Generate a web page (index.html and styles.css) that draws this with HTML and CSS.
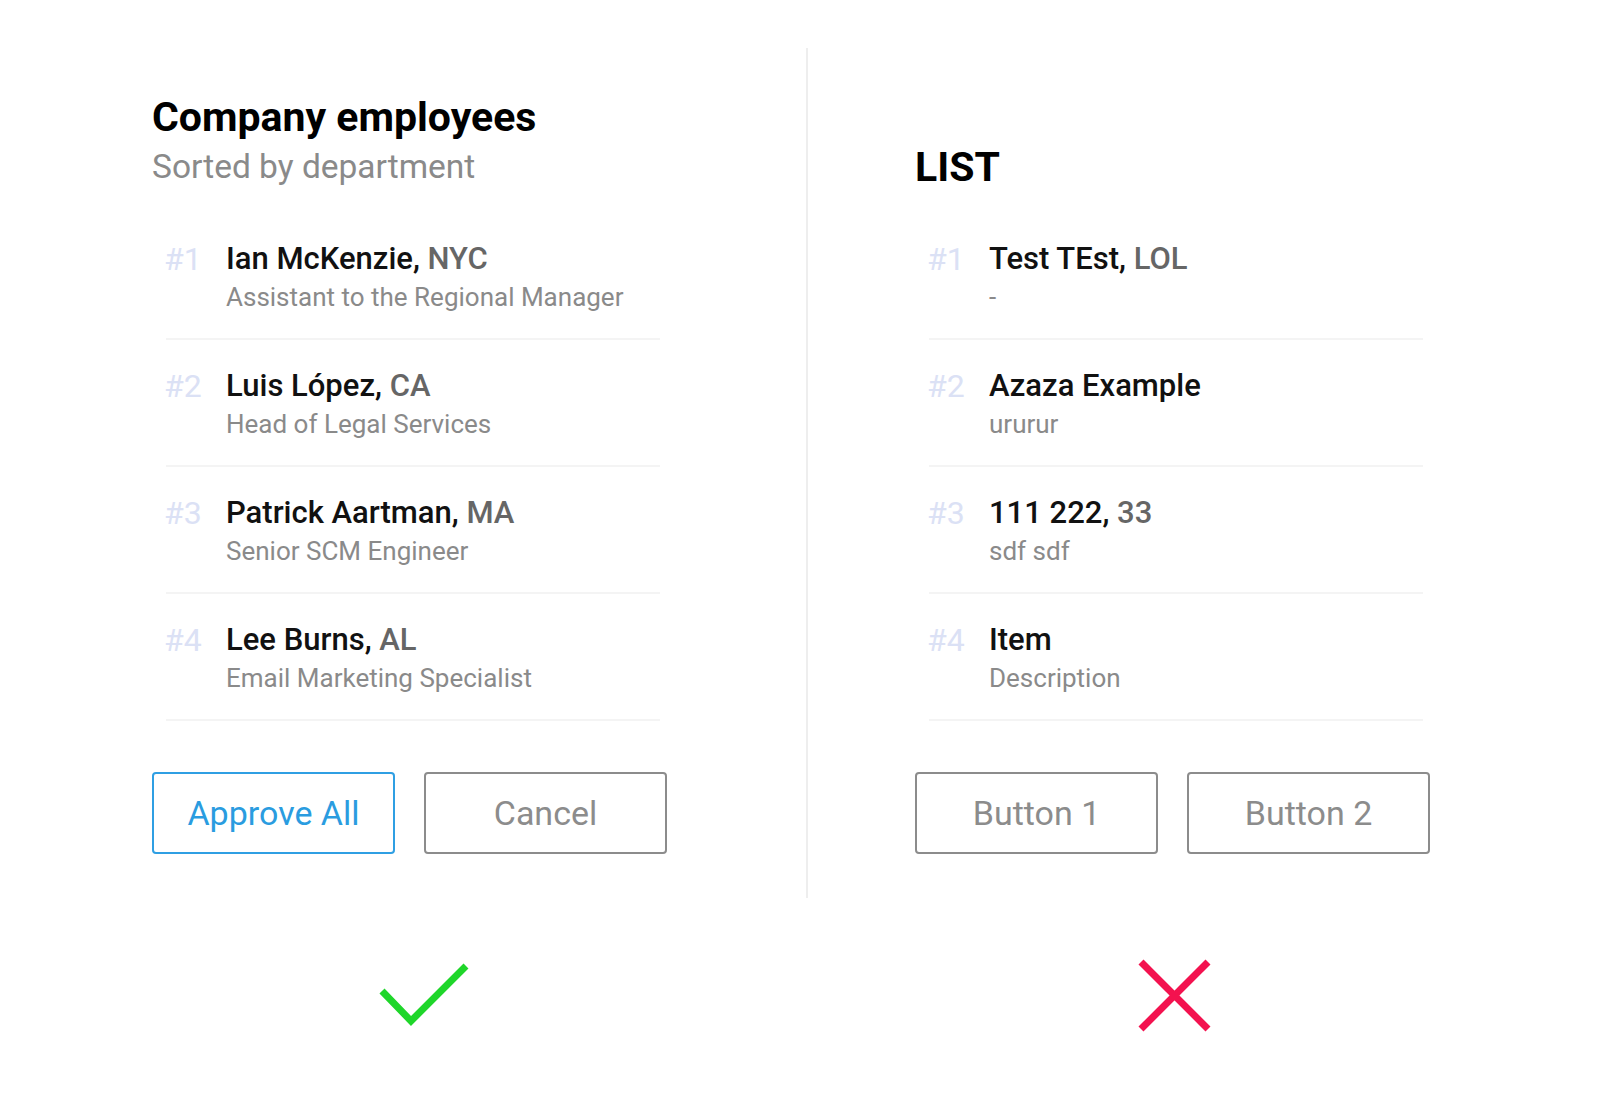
FILE: index.html
```html
<!DOCTYPE html>
<html lang="en">
<head>
    <meta charset="UTF-8">
    <meta name="viewport" content="width=device-width, initial-scale=1.0">
    <title>List design - do and don't</title>
    <link rel="stylesheet" href="styles.css">
</head>
<body>
    <div class="board">
        <!-- Good example -->
        <div class="panel">
            <div class="panel-header">
                <h1 class="title">Company employees</h1>
                <div class="subtitle">Sorted by department</div>
            </div>
            <ul class="list">
                <li class="list-row">
                    <span class="row-num">#1</span>
                    <div class="row-body">
                        <div class="row-name">Ian McKenzie, <span class="row-extra">NYC</span></div>
                        <div class="row-desc">Assistant to the Regional Manager</div>
                    </div>
                </li>
                <li class="list-row">
                    <span class="row-num">#2</span>
                    <div class="row-body">
                        <div class="row-name">Luis López, <span class="row-extra">CA</span></div>
                        <div class="row-desc">Head of Legal Services</div>
                    </div>
                </li>
                <li class="list-row">
                    <span class="row-num">#3</span>
                    <div class="row-body">
                        <div class="row-name">Patrick Aartman, <span class="row-extra">MA</span></div>
                        <div class="row-desc">Senior SCM Engineer</div>
                    </div>
                </li>
                <li class="list-row">
                    <span class="row-num">#4</span>
                    <div class="row-body">
                        <div class="row-name">Lee Burns, <span class="row-extra">AL</span></div>
                        <div class="row-desc">Email Marketing Specialist</div>
                    </div>
                </li>
            </ul>
            <div class="actions">
                <button class="btn btn-primary">Approve All</button>
                <button class="btn">Cancel</button>
            </div>
        </div>

        <div class="divider"></div>

        <!-- Bad example -->
        <div class="panel">
            <div class="panel-header panel-header-plain">
                <h1 class="title">LIST</h1>
            </div>
            <ul class="list">
                <li class="list-row">
                    <span class="row-num">#1</span>
                    <div class="row-body">
                        <div class="row-name">Test TEst, <span class="row-extra">LOL</span></div>
                        <div class="row-desc">-</div>
                    </div>
                </li>
                <li class="list-row">
                    <span class="row-num">#2</span>
                    <div class="row-body">
                        <div class="row-name">Azaza Example</div>
                        <div class="row-desc">ururur</div>
                    </div>
                </li>
                <li class="list-row">
                    <span class="row-num">#3</span>
                    <div class="row-body">
                        <div class="row-name">111 222, <span class="row-extra">33</span></div>
                        <div class="row-desc">sdf sdf</div>
                    </div>
                </li>
                <li class="list-row">
                    <span class="row-num">#4</span>
                    <div class="row-body">
                        <div class="row-name">Item</div>
                        <div class="row-desc">Description</div>
                    </div>
                </li>
            </ul>
            <div class="actions">
                <button class="btn">Button 1</button>
                <button class="btn">Button 2</button>
            </div>
        </div>
    </div>

    <div class="verdicts">
        <div class="verdict">
            <svg class="verdict-icon" width="140" height="80" viewBox="0 0 140 80">
                <polyline points="46,36 75,66 130,11" fill="none" stroke="#1fd62a" stroke-width="7"/>
            </svg>
        </div>
        <div class="verdict verdict-bad">
            <svg class="verdict-icon" width="140" height="80" viewBox="0 0 140 80">
                <line x1="42" y1="7" x2="109" y2="74" stroke="#f3124f" stroke-width="7"/>
                <line x1="109" y1="7" x2="42" y2="74" stroke="#f3124f" stroke-width="7"/>
            </svg>
        </div>
    </div>
</body>
</html>
```

FILE: styles.css
```css
body {
    margin: 0;
    background: #fff;
    font-family: 'Roboto', 'Liberation Sans', sans-serif;
    color: #111;
}

.board {
    display: flex;
    padding: 48px 0 0 152px;
}

.panel {
    width: 520px;
    padding: 42px 0 44px;
}

.divider {
    width: 2px;
    background: #eeeeee;
    margin: 0 107px 0 134px;
}

.panel-header {
    height: 101px;
    display: flex;
    flex-direction: column;
}

.panel-header-plain {
    justify-content: flex-end;
}

.title {
    margin: 3px 0 0;
    font-size: 41px;
    line-height: 48px;
    font-weight: bold;
    color: #000;
}

.panel-header-plain .title {
    margin: 0;
}

.subtitle {
    margin-top: 6px;
    font-size: 33.5px;
    line-height: 40px;
    color: #8a8a8a;
}

.list {
    list-style: none;
    margin: 22px 12px 0 14px;
    padding: 0;
}

.list-row {
    display: flex;
    padding: 28px 0 26px;
    border-bottom: 2px solid #f4f4f4;
}

.row-num {
    width: 62px;
    margin-left: -2px;
    flex-shrink: 0;
    font-size: 32px;
    line-height: 36px;
    color: #dbe1f5;
}

.row-name {
    font-size: 31px;
    line-height: 36px;
    font-weight: 500;
    color: #111;
}

.row-extra {
    color: #666;
}

.row-desc {
    margin-top: 5px;
    font-size: 26px;
    line-height: 30px;
    color: #8a8a8a;
}

.actions {
    display: flex;
    gap: 29px;
    margin-top: 51px;
}

.btn {
    width: 243px;
    height: 82px;
    flex-shrink: 0;
    background: #fff;
    border: 2px solid #8c8c8c;
    border-radius: 4px;
    font-family: inherit;
    font-size: 34px;
    color: #8c8c8c;
    cursor: pointer;
}

.btn-primary {
    border-color: #2f9fe3;
    color: #2a9ce0;
}

.verdicts {
    display: flex;
    padding: 57px 0 0 152px;
}

.verdict {
    width: 508px;
    display: flex;
    justify-content: center;
}

.verdict-bad {
    margin-left: 255px;
}

.verdict-icon {
    display: block;
}
```
